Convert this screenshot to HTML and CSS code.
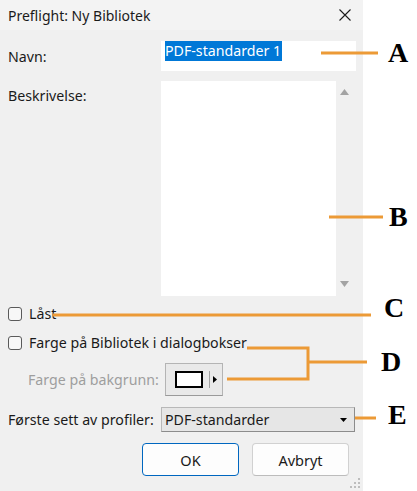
FILE: index.html
```html
<!DOCTYPE html>
<html lang="no">
<head>
<meta charset="utf-8">
<title>Preflight: Ny Bibliotek</title>
<link rel="stylesheet" href="styles.css">
</head>
<body>
<div class="page">
  <div class="dialog">
    <div class="titlebar">
      <span class="title">Preflight: Ny Bibliotek</span>
      <svg class="close" width="12" height="12" viewBox="0 0 12 12"><path d="M0.5 0.5L11.5 11.5M11.5 0.5L0.5 11.5" stroke="#1c1c1c" stroke-width="1.1" fill="none"/></svg>
    </div>
    <div class="body">
      <div class="row row-name">
        <span class="lbl">Navn:</span>
        <div class="input"><span class="sel">PDF-standarder 1</span></div>
      </div>
      <div class="row row-desc">
        <span class="lbl lbl-top">Beskrivelse:</span>
        <div class="textarea">
          <div class="ta-field"></div>
          <div class="ta-scroll">
            <svg width="9" height="6" viewBox="0 0 9 6"><path d="M4.5 0L9 6H0Z" fill="#a3a3a3"/></svg>
            <svg width="9" height="6" viewBox="0 0 9 6"><path d="M0 0H9L4.5 6Z" fill="#a3a3a3"/></svg>
          </div>
        </div>
      </div>
      <div class="check-row check-first"><span class="cb"></span><span class="txt">Låst</span></div>
      <div class="check-row"><span class="cb"></span><span class="txt">Farge på Bibliotek i dialogbokser</span></div>
      <div class="row-bg">
        <span class="lbl-dis">Farge på bakgrunn:</span>
        <div class="colorbtn">
          <span class="swatch"></span>
          <span class="cb-sep"></span>
          <svg width="4" height="7" viewBox="0 0 4 7"><path d="M0 0L4 3.5L0 7Z" fill="#000"/></svg>
        </div>
      </div>
      <div class="row row-prof">
        <span class="lbl">Første sett av profiler:</span>
        <div class="select">
          <span class="sel-txt">PDF-standarder</span>
          <svg width="7" height="4" viewBox="0 0 7 4"><path d="M0 0H7L3.5 4Z" fill="#000"/></svg>
        </div>
      </div>
      <div class="buttons">
        <button class="btn btn-ok">OK</button>
        <button class="btn">Avbryt</button>
      </div>
    </div>
    <svg class="grip" width="10" height="10" viewBox="0 0 10 10">
      <rect x="8" y="0" width="2" height="2" fill="#bdbdbd"/>
      <rect x="4" y="4" width="2" height="2" fill="#bdbdbd"/>
      <rect x="8" y="4" width="2" height="2" fill="#bdbdbd"/>
      <rect x="0" y="8" width="2" height="2" fill="#bdbdbd"/>
      <rect x="4" y="8" width="2" height="2" fill="#bdbdbd"/>
      <rect x="8" y="8" width="2" height="2" fill="#bdbdbd"/>
    </svg>
  </div>
  <div class="margin"></div>
  <svg class="annot" width="417" height="491" viewBox="0 0 417 491">
    <g stroke="#ec9a36" stroke-width="3" fill="none">
      <path d="M321 53H378"/>
      <path d="M329 217H383"/>
      <path d="M53 315H371"/>
      <path d="M247 348H308V379H227M308 362H367"/>
      <path d="M355 418H376"/>
    </g>
    <g class="letters">
      <text x="388" y="62">A</text>
      <text x="389" y="226">B</text>
      <text x="384" y="317">C</text>
      <text x="381" y="371">D</text>
      <text x="388" y="424">E</text>
    </g>
  </svg>
</div>
</body>
</html>
```

FILE: styles.css
```css
* { box-sizing: border-box; }
html, body { margin: 0; padding: 0; background: #fff; }
body { font-family: "Noto Sans", "Open Sans", sans-serif; font-size: 14.2px; color: #1a1a1a; }

.page { position: relative; width: 417px; height: 491px; display: flex; }
.dialog { position: relative; width: 363px; height: 491px; background: #f0f0f0; display: flex; flex-direction: column; }
.margin { flex: 1; background: #fff; }

.titlebar { height: 30px; background: #f3f3f3; display: flex; align-items: center; justify-content: space-between; padding: 0 12px 0 8px; }
.title { font-size: 14px; color: #1a1a1a; }
.close { display: block; }

.body { display: flex; flex-direction: column; padding: 0 7px 0 8px; }
.row { display: grid; grid-template-columns: 153px 1fr; }
.lbl { align-self: center; }
.lbl-top { align-self: start; padding-top: 5px; }

.row-name { margin-top: 11px; height: 30px; }
.input { background: #fff; height: 30px; padding: 0 4px; display: flex; align-items: center; }
.sel { background: #0078d7; color: #fff; font-size: 14.2px; line-height: 20px; height: 20px; margin-top: -10px; padding-right: 1px; }

.row-desc { margin-top: 10px; height: 215px; }
.textarea { display: flex; height: 215px; width: 189px; }
.ta-field { width: 175px; background: #fff; }
.ta-scroll { width: 14px; display: flex; flex-direction: column; justify-content: space-between; align-items: center; padding: 8px 0 9px 2px; }
.ta-scroll svg { display: block; }

.check-row { display: flex; align-items: center; height: 18px; margin-top: 11px; gap: 7px; }
.check-first { margin-top: 9px; }
.cb { width: 14px; height: 14px; border: 1px solid #5a5a5a; border-radius: 3px; background: #f7f7f7; flex: none; }
.txt { line-height: 18px; }

.row-bg { display: flex; align-items: center; height: 33px; margin-top: 11px; padding-left: 20px; }
.lbl-dis { width: 137px; color: #9e9e9e; }
.colorbtn { width: 58px; height: 33px; background: #e9e9e9; border: 1px solid #b4b4b4; border-bottom-color: #9a9a9a; display: flex; align-items: center; padding-left: 9px; }
.swatch { width: 28px; height: 17px; background: #fff; border: 2px solid #000; }
.cb-sep { width: 1px; height: 17px; background: #a0a0a0; margin: 0 3px 0 6px; }
.colorbtn svg { display: block; }

.row-prof { margin-top: 11px; height: 25px; }
.select { width: 194px; height: 25px; background: #e6e6e6; border: 1px solid #b8b8b8; border-right-color: #8c8c8c; border-bottom-color: #8c8c8c; display: flex; align-items: center; justify-content: space-between; padding: 0 7px 0 3px; }
.sel-txt { font-size: 14.2px; }
.select svg { display: block; }

.buttons { display: flex; justify-content: flex-end; gap: 13px; margin-top: 11px; padding-right: 7px; }
.btn { width: 97px; height: 33px; font-family: inherit; font-size: 14.5px; color: #1a1a1a; background: #fdfdfd; border: 1px solid #d1d1d1; border-bottom-color: #bcbcbc; border-radius: 4px; padding: 0; }
.btn-ok { border: 1px solid #0067c0; }

.grip { position: absolute; right: 3px; bottom: 3px; display: block; }

.annot { position: absolute; left: 0; top: 0; pointer-events: none; }
.letters text { font-family: "Liberation Serif", "Times New Roman", serif; font-weight: bold; font-size: 28px; fill: #000; }
```
